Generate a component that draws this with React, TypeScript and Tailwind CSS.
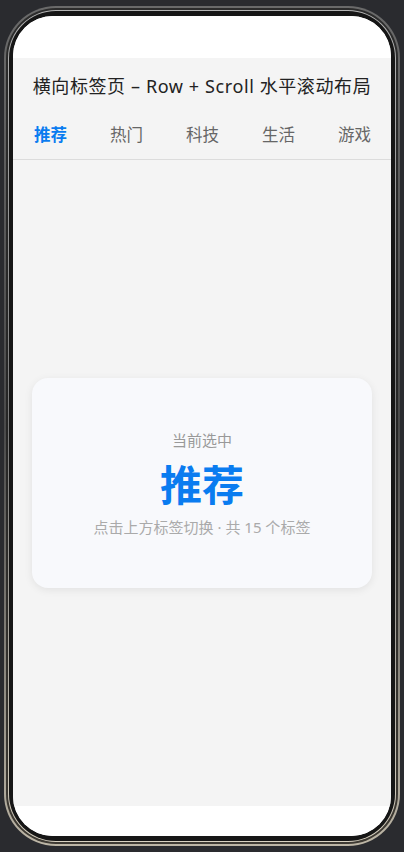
const tabs = ["推荐", "热门", "科技", "生活", "游戏"];

const cjk = { fontFamily: '"Noto Sans", "Noto Sans CJK SC", sans-serif' };

export default function App() {
  const active = 0;
  return (
    <div className="h-[852px] w-[404px] bg-[#2a2b2f] pl-[4px] pr-[4px] pt-[6px]" style={cjk}>
      <div className="h-[840px] w-[396px] rounded-[52px] bg-gradient-to-b from-[#6a6a6a] via-[#4a4a4a] to-[#bdb6a6] p-[2px]">
        <div className="h-full w-full rounded-[50px] bg-gradient-to-b from-[#2c2c2c] via-[#262626] to-[#3e3a33] p-[2px]">
          <div className="h-full w-full rounded-[48px] bg-gradient-to-b from-[#b5b5b5] via-[#7a7a7a] to-[#d9d2c2] p-[1px]">
            <div className="h-full w-full rounded-[47px] bg-[#161616] pb-[5px] pl-[4px] pr-[4px] pt-[5px]">
              <div className="flex h-full w-full flex-col overflow-hidden rounded-[40px] bg-white">
                <div className="h-[42px] shrink-0 bg-white" />
                <div className="flex shrink-0 flex-col border-b border-[#dcdcdc] bg-[#f4f4f4]">
                  <div className="flex h-[56px] items-center justify-center text-[18px] tracking-[0.6px] text-[#222]">
                    横向标签页 – Row + Scroll 水平滚动布局
                  </div>
                  <div className="flex h-[45px] items-center gap-[43px] overflow-hidden whitespace-nowrap pb-[3px] pl-[21px]">
                    {tabs.map((t, i) => (
                      <span
                        key={t}
                        className={
                          i === active
                            ? "shrink-0 text-[16.5px] font-bold text-[#0a7cf0]"
                            : "shrink-0 text-[16.5px] text-[#666]"
                        }
                      >
                        {t}
                      </span>
                    ))}
                  </div>
                </div>
                <div className="flex flex-1 items-center justify-center bg-[#f4f4f4] px-[19px]">
                  <div className="flex h-[210px] w-full flex-col items-center justify-center rounded-[16px] bg-[#f8f9fc] shadow-[0_2px_8px_rgba(0,0,0,0.08)]">
                    <div className="text-[15px] leading-[20px] text-[#999]">当前选中</div>
                    <div className="mt-[10px] text-[42px] font-bold leading-[50px] text-[#0a7cf0]">推荐</div>
                    <div className="mt-[7px] text-[15px] leading-[20px] text-[#aaa]">点击上方标签切换 · 共 15 个标签</div>
                  </div>
                </div>
                <div className="h-[30px] shrink-0 bg-white" />
              </div>
            </div>
          </div>
        </div>
      </div>
    </div>
  );
}
